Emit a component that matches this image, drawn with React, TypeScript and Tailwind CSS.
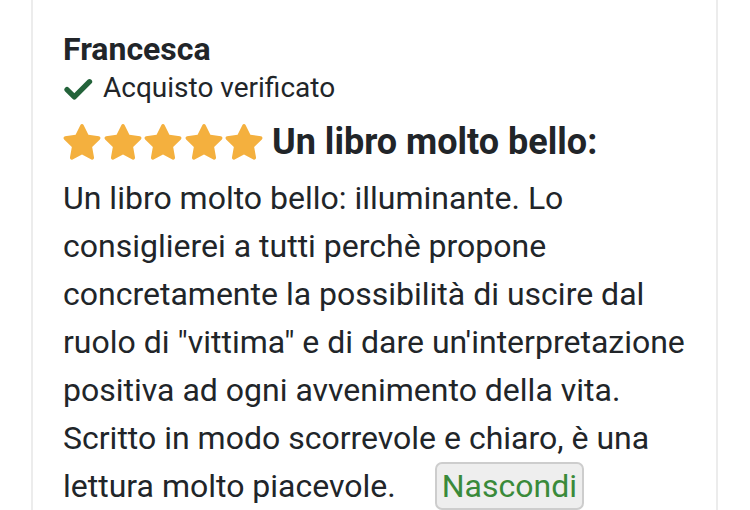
import React from "react";

const Star = () => (
  <svg viewBox="1.9 2.2 20.2 19.6" className="w-[38px] h-[37px]" fill="#f4b03e">
    <path d="M12 2.2c.4 0 .7.2.9.6l2.5 5.1 5.6.8c.8.1 1.1 1.1.5 1.7l-4.1 4 1 5.6c.1.8-.7 1.4-1.4 1l-5-2.6-5 2.6c-.7.4-1.5-.2-1.4-1l1-5.6-4.1-4c-.6-.6-.3-1.6.5-1.7l5.6-.8 2.5-5.1c.2-.4.5-.6.9-.6z" />
  </svg>
);

const App: React.FC = () => {
  return (
    <div className="w-[750px] h-[510px] overflow-hidden bg-white" style={{ fontFamily: "Roboto, sans-serif" }}>
      <div className="ml-[31px] w-[687px] min-h-[510px] border-x-2 border-[#ececec] pl-[30px] pr-[14px] pt-[30px] text-[#212529]">
        <div className="text-[32px] font-bold leading-[38px]">Francesca</div>
        <div className="flex items-center gap-[10px] text-[28px] leading-[40px]">
          <svg viewBox="0 0 28 21" className="w-[30px] h-[22px] mt-[2px]" fill="none" stroke="#23633a" strokeWidth="5" strokeLinecap="round" strokeLinejoin="round">
            <path d="M3.5 11l7 7L25 3.5" />
          </svg>
          <span>Acquisto verificato</span>
        </div>
        <div className="flex items-center mt-[10px]">
          <div className="flex gap-[2.5px]">
            <Star />
            <Star />
            <Star />
            <Star />
            <Star />
          </div>
          <span className="ml-[9px] text-[36px] font-bold leading-[48px]">Un libro molto bello:</span>
        </div>
        <p className="mt-[8px] text-[32px] leading-[48px]">
          Un libro molto bello: illuminante. Lo consiglierei a tutti perchè propone concretamente la possibilità di uscire dal ruolo di "vittima" e di dare un'interpretazione positiva ad ogni avvenimento della vita. Scritto in modo scorrevole e chiaro, è una lettura molto piacevole.
          <button className="ml-[39px] px-[5px] rounded-[7px] border-2 border-[#cdcdcd] bg-[#eeeeee] text-[#3a8a3a] text-[32px] leading-[44px] align-baseline">
            Nascondi
          </button>
        </p>
      </div>
    </div>
  );
};

export default App;
